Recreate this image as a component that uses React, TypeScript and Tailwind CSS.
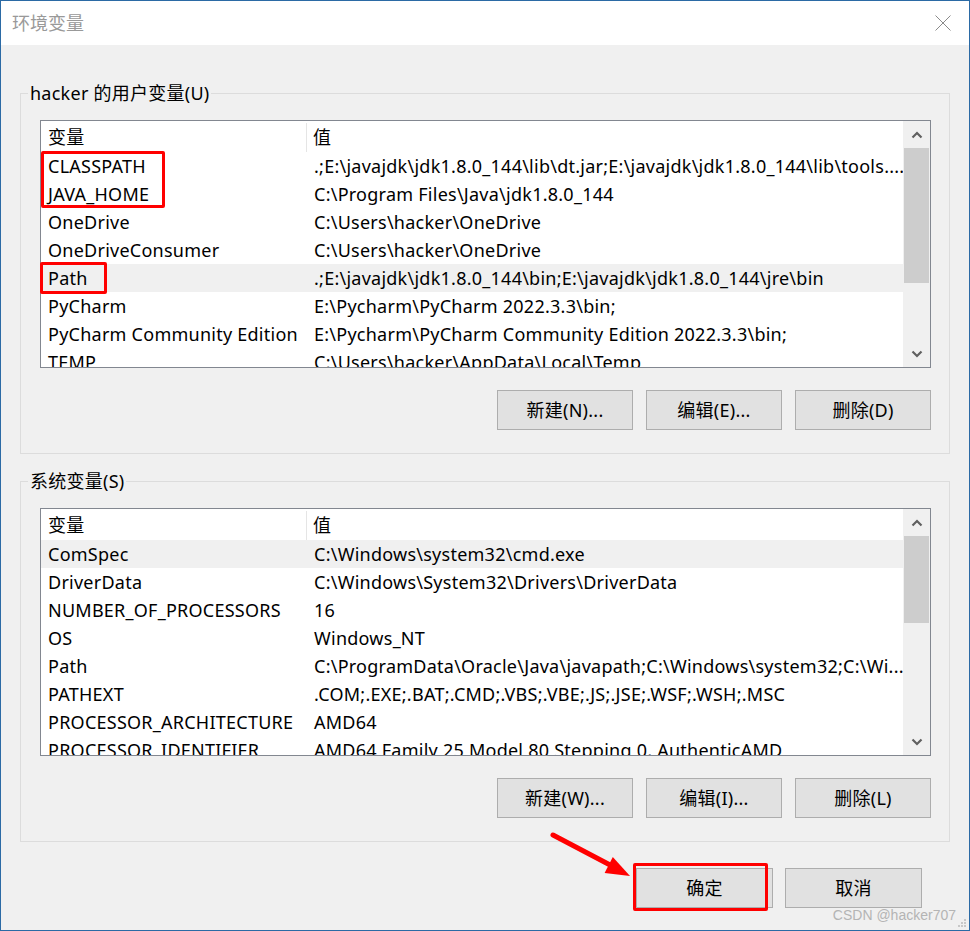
import React from 'react'

type Row = { name: string; value: string }

const userRows: Row[] = [
  { name: 'CLASSPATH', value: '.;E:\\javajdk\\jdk1.8.0_144\\lib\\dt.jar;E:\\javajdk\\jdk1.8.0_144\\lib\\tools....' },
  { name: 'JAVA_HOME', value: 'C:\\Program Files\\Java\\jdk1.8.0_144' },
  { name: 'OneDrive', value: 'C:\\Users\\hacker\\OneDrive' },
  { name: 'OneDriveConsumer', value: 'C:\\Users\\hacker\\OneDrive' },
  { name: 'Path', value: '.;E:\\javajdk\\jdk1.8.0_144\\bin;E:\\javajdk\\jdk1.8.0_144\\jre\\bin' },
  { name: 'PyCharm', value: 'E:\\Pycharm\\PyCharm 2022.3.3\\bin;' },
  { name: 'PyCharm Community Edition', value: 'E:\\Pycharm\\PyCharm Community Edition 2022.3.3\\bin;' },
  { name: 'TEMP', value: 'C:\\Users\\hacker\\AppData\\Local\\Temp' },
]

const systemRows: Row[] = [
  { name: 'ComSpec', value: 'C:\\Windows\\system32\\cmd.exe' },
  { name: 'DriverData', value: 'C:\\Windows\\System32\\Drivers\\DriverData' },
  { name: 'NUMBER_OF_PROCESSORS', value: '16' },
  { name: 'OS', value: 'Windows_NT' },
  { name: 'Path', value: 'C:\\ProgramData\\Oracle\\Java\\javapath;C:\\Windows\\system32;C:\\Wi...' },
  { name: 'PATHEXT', value: '.COM;.EXE;.BAT;.CMD;.VBS;.VBE;.JS;.JSE;.WSF;.WSH;.MSC' },
  { name: 'PROCESSOR_ARCHITECTURE', value: 'AMD64' },
  { name: 'PROCESSOR_IDENTIFIER', value: 'AMD64 Family 25 Model 80 Stepping 0, AuthenticAMD' },
]

function Chevron({ down }: { down?: boolean }) {
  return (
    <svg width="12" height="8" viewBox="0 0 12 8">
      <path
        d={down ? 'M1.5 1.5 L6 6 L10.5 1.5' : 'M1.5 6.5 L6 2 L10.5 6.5'}
        fill="none"
        stroke="#606060"
        strokeWidth="2.2"
      />
    </svg>
  )
}

function VarList({ rows, selected, thumb }: { rows: Row[]; selected: number; thumb: string }) {
  return (
    <div className="flex h-[248px] w-[891px] border border-[#828790] bg-white">
      <div className="flex min-w-0 flex-1 flex-col overflow-hidden tracking-[0.25px]">
        <div className="flex h-[31px] shrink-0 items-center pt-[2px]">
          <div className="flex h-full w-[266px] items-center border-r border-[#e5e5e5] pl-[7px]">变量</div>
          <div className="pl-[6px]">值</div>
        </div>
        {rows.map((r, i) => (
          <div
            key={r.name}
            className={`flex h-[28px] shrink-0 items-center ${i === selected ? 'bg-[#f0f0f0]' : ''}`}
          >
            <div className="w-[266px] shrink-0 whitespace-nowrap pl-[7px]">{r.name}</div>
            <div className="min-w-0 flex-1 overflow-hidden whitespace-nowrap pl-[7px]">{r.value}</div>
          </div>
        ))}
      </div>
      <div className="flex w-[27px] shrink-0 flex-col bg-[#f0f0f0]">
        <div className="flex h-[27px] shrink-0 items-center justify-center">
          <Chevron />
        </div>
        <div className="flex-1 px-[1px]">
          <div className={`${thumb} bg-[#cdcdcd]`} />
        </div>
        <div className="flex h-[27px] shrink-0 items-center justify-center">
          <Chevron down />
        </div>
      </div>
    </div>
  )
}

function Btn({ label, w = 'w-[136px]' }: { label: string; w?: string }) {
  return (
    <div className={`flex h-[40px] ${w} items-center justify-center border border-[#adadad] bg-[#e1e1e1] tracking-[0.25px]`}>
      {label}
    </div>
  )
}

function Group({ title, children }: { title: string; children: React.ReactNode }) {
  return (
    <fieldset className="w-[930px] border border-[#dcdcdc]">
      <legend className="ml-[7px] px-[2px] leading-[24px] tracking-[0.25px]">{title}</legend>
      <div className="pr-[18px] pb-[23px] pl-[19px]">{children}</div>
    </fieldset>
  )
}

export default function App() {
  return (
    <div
      className="relative flex h-[931px] w-[970px] flex-col overflow-hidden border border-[#2b6aa5] bg-[#f0f0f0] text-[18px] text-black"
      style={{ fontFamily: '"Noto Sans", "Noto Sans CJK SC", sans-serif' }}
    >
      {/* title bar */}
      <div className="flex h-[44px] shrink-0 items-center justify-between bg-white pr-[18px] pl-[11px]">
        <span className="text-[#999999]">环境变量</span>
        <svg width="16" height="16" viewBox="0 0 16 16">
          <path d="M0.5 0.5 L15.5 15.5 M15.5 0.5 L0.5 15.5" stroke="#8a8a8a" strokeWidth="1" />
        </svg>
      </div>

      <div className="flex flex-1 flex-col pl-[19px]">
        <div className="mt-[36px]">
          <Group title="hacker 的用户变量(U)">
            <div className="mt-[15px]">
              <VarList rows={userRows} selected={4} thumb="h-[135px]" />
            </div>
            <div className="mt-[22px] flex justify-end gap-[13px]">
              <Btn label="新建(N)..." />
              <Btn label="编辑(E)..." />
              <Btn label="删除(D)" />
            </div>
          </Group>
        </div>

        <div className="mt-[15px]">
          <Group title="系统变量(S)">
            <div className="mt-[15px]">
              <VarList rows={systemRows} selected={0} thumb="h-[87px]" />
            </div>
            <div className="mt-[22px] flex justify-end gap-[13px]">
              <Btn label="新建(W)..." />
              <Btn label="编辑(I)..." />
              <Btn label="删除(L)" />
            </div>
          </Group>
        </div>

        <div className="mt-[26px] flex justify-end gap-[12px] pr-[47px]">
          <Btn label="确定" w="w-[137px]" />
          <Btn label="取消" w="w-[137px]" />
        </div>
      </div>

      {/* red annotations */}
      <div className="absolute top-[150px] left-[40px] h-[57px] w-[124px] rounded-[2px] border-[3px] border-[#ff0000]" />
      <div className="absolute top-[261px] left-[39px] h-[32px] w-[67px] rounded-[2px] border-[3px] border-[#ff0000]" />
      <div className="absolute top-[862px] left-[632px] h-[48px] w-[135px] rounded-[2px] border-[3px] border-[#ff0000]" />
      <svg className="absolute top-0 left-0" width="968" height="929" viewBox="1 1 968 929">
        <line x1="553" y1="835" x2="612" y2="866" stroke="#ff0000" strokeWidth="5" strokeLinecap="round" />
        <polygon points="630,876 612.8,856.9 604.6,872.9" fill="#ff0000" />
      </svg>

      {/* watermark */}
      <div
        className="absolute top-[905px] right-[13px] text-[14px] leading-[18px] text-[#b4b4b4]"
        style={{ fontFamily: '"Liberation Sans", Arial, sans-serif' }}
      >
        CSDN @hacker707
      </div>
      <svg className="absolute right-[2px] bottom-[2px]" width="10" height="10" viewBox="0 0 10 10">
        <rect x="7" y="1" width="2" height="2" fill="#c8c8c8" />
        <rect x="4" y="4" width="2" height="2" fill="#c8c8c8" />
        <rect x="7" y="4" width="2" height="2" fill="#c8c8c8" />
        <rect x="1" y="7" width="2" height="2" fill="#c8c8c8" />
        <rect x="4" y="7" width="2" height="2" fill="#c8c8c8" />
        <rect x="7" y="7" width="2" height="2" fill="#c8c8c8" />
      </svg>
    </div>
  )
}
